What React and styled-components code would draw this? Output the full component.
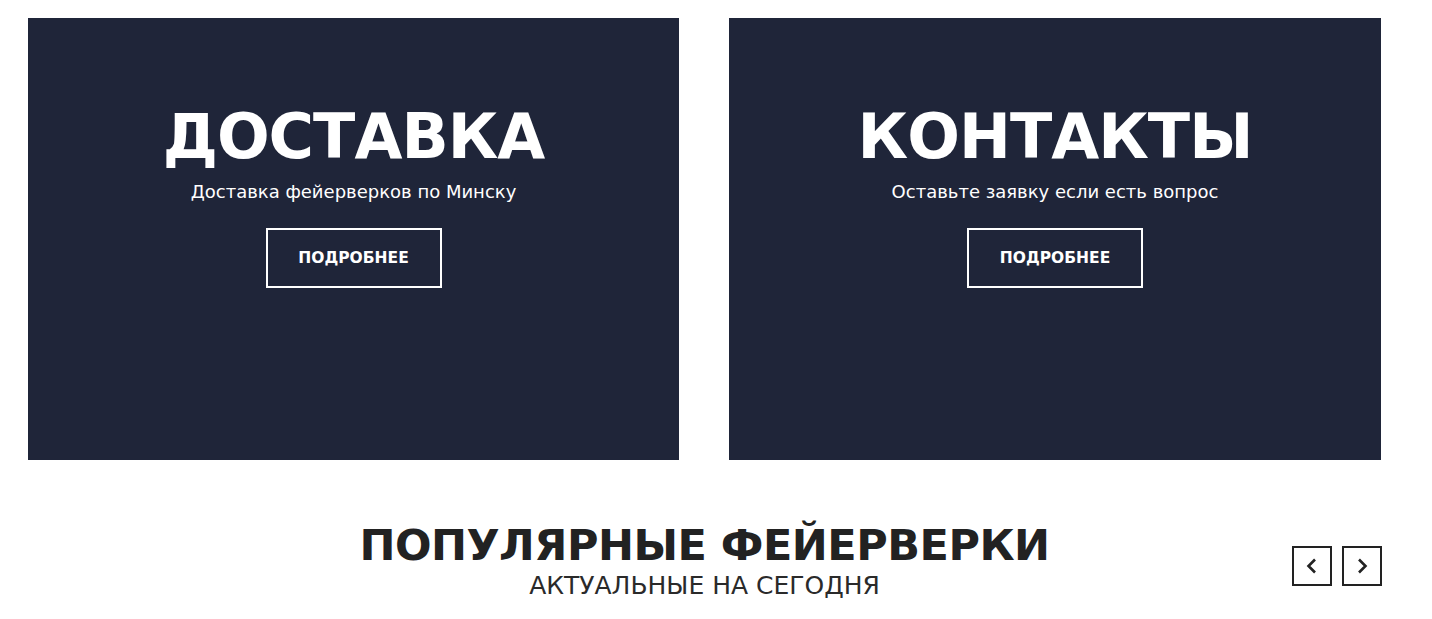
import React from 'react'
import styled, { createGlobalStyle } from 'styled-components'

const GlobalStyle = createGlobalStyle`
  body {
    margin: 0;
    padding: 0;
    background: #fff;
    font-family: "DejaVu Sans", "Open Sans", sans-serif;
  }
  h1, h2, h3, p {
    margin: 0;
    padding: 0;
  }
`

const Page = styled.div`
  width: 1353px;
  padding: 18px 0 0 28px;
`

const Cards = styled.div`
  display: grid;
  grid-template-columns: 651px 652px;
  gap: 50px;
`

const Card = styled.div`
  height: 442px;
  background: #1f2539;
  color: #fff;
  display: flex;
  flex-direction: column;
  align-items: center;
  padding-top: 84px;
  box-sizing: border-box;
`

const CardTitle = styled.h2`
  font-size: 62px;
  font-weight: 700;
  line-height: 70px;
  letter-spacing: -1px;
`

const CardText = styled.p`
  font-size: 18px;
  line-height: 22px;
  margin-top: 9px;
`

const MoreButton = styled.button`
  margin-top: 25px;
  width: 176px;
  height: 60px;
  background: transparent;
  border: 2px solid #fff;
  color: #fff;
  font-family: inherit;
  font-weight: 700;
  font-size: 15.5px;
  cursor: pointer;
`

const Section = styled.div`
  position: relative;
  margin-top: 59px;
  display: flex;
  flex-direction: column;
  align-items: center;
`

const SectionTitle = styled.h1`
  font-size: 43px;
  line-height: 52px;
  font-weight: 700;
  color: #222;
  letter-spacing: -0.5px;
`

const SectionSub = styled.p`
  font-size: 25px;
  line-height: 30px;
  font-weight: 400;
  color: #2a2a2a;
`

const Arrows = styled.div`
  position: absolute;
  right: -1px;
  top: 27px;
  display: flex;
  gap: 10px;
`

const Arrow = styled.button`
  width: 40px;
  height: 40px;
  border: 2px solid #222;
  background: #fff;
  display: flex;
  align-items: center;
  justify-content: center;
  padding: 0;
  cursor: pointer;
`

const Chevron = ({ dir }) => (
  <svg width="14" height="18" viewBox="0 0 14 18">
    <path
      d={dir === 'left' ? 'M10 2.5 L3.5 9 L10 15.5' : 'M4 2.5 L10.5 9 L4 15.5'}
      fill="none"
      stroke="#222"
      strokeWidth="2.6"
    />
  </svg>
)

const cards = [
  { title: 'ДОСТАВКА', text: 'Доставка фейерверков по Минску' },
  { title: 'КОНТАКТЫ', text: 'Оставьте заявку если есть вопрос' },
]

export default function App() {
  return (
    <>
      <GlobalStyle />
      <Page>
        <Cards>
          {cards.map(c => (
            <Card key={c.title}>
              <CardTitle>{c.title}</CardTitle>
              <CardText>{c.text}</CardText>
              <MoreButton>ПОДРОБНЕЕ</MoreButton>
            </Card>
          ))}
        </Cards>
        <Section>
          <SectionTitle>ПОПУЛЯРНЫЕ ФЕЙЕРВЕРКИ</SectionTitle>
          <SectionSub>АКТУАЛЬНЫЕ НА СЕГОДНЯ</SectionSub>
          <Arrows>
            <Arrow><Chevron dir="left" /></Arrow>
            <Arrow><Chevron dir="right" /></Arrow>
          </Arrows>
        </Section>
      </Page>
    </>
  )
}
